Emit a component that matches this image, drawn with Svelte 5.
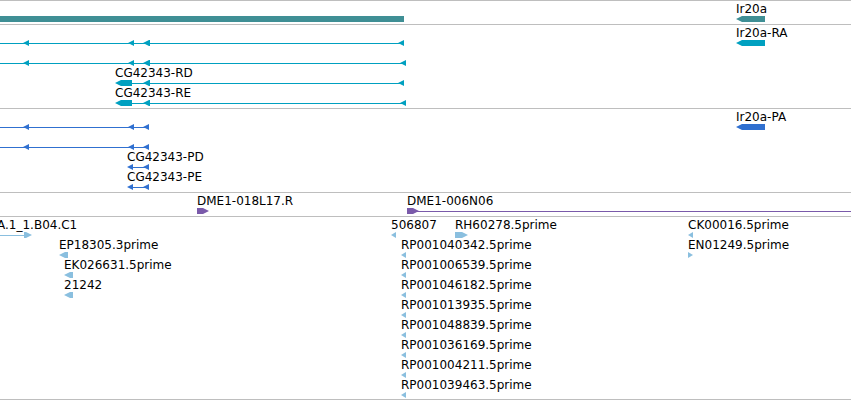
<script>

const teal = "#3f8f95"
const cyan = "#00a0c0"
const blue = "#3070d0"
const purple = "#7a5aaa"
const sky = "#8abfdf"

// an arrow: x, width, dir ("left", "right" or "none")
const left = (x, w) => ({ x, w, dir: "left" })
const right = (x, w) => ({ x, w, dir: "right" })

// line: [start, end] of the thin connector, labels: [x, text]
const tracks = [
  {
    name: "Genes", color: teal,
    rows: [
      { labels: [[736, "Ir20a"]], arrows: [{ x: 0, w: 404, dir: "none" }, left(736, 29)] }
    ]
  },
  {
    name: "Transcripts", color: cyan,
    rows: [
      { line: [0, 400], labels: [[736, "Ir20a-RA"]], arrows: [left(23, 6), left(128, 6), left(143, 7), left(398, 6), left(736, 29)] },
      { line: [0, 402], arrows: [left(23, 6), left(128, 6), left(143, 7), left(400, 6)] },
      { line: [118, 400], labels: [[115, "CG42343-RD"]], arrows: [left(115, 17), left(143, 7), left(398, 6)] },
      { line: [118, 402], labels: [[115, "CG42343-RE"]], arrows: [left(115, 17), left(143, 7), left(400, 6)] }
    ]
  },
  {
    name: "Proteins", color: blue,
    rows: [
      { line: [0, 146], labels: [[736, "Ir20a-PA"]], arrows: [left(23, 6), left(128, 6), left(143, 6), left(736, 29)] },
      { line: [0, 146], arrows: [left(23, 6), left(128, 6), left(143, 6)] },
      { line: [129, 146], labels: [[127, "CG42343-PD"]], arrows: [left(127, 6), left(143, 6)] },
      { line: [129, 146], labels: [[127, "CG42343-PE"]], arrows: [left(127, 6), left(143, 6)] }
    ]
  },
  {
    name: "Clones", color: purple,
    rows: [
      { line: [412, 4000], labels: [[197, "DME1-018L17.R"], [407, "DME1-006N06"]], arrows: [right(197, 12), right(407, 12)] }
    ]
  },
  {
    name: "ESTs", color: sky,
    rows: [
      {
        line: [0, 28],
        labels: [[-3, "A.1_1.B04.C1"], [391, "506807"], [455, "RH60278.5prime"], [688, "CK00016.5prime"]],
        arrows: [right(24, 8), left(391, 5), right(455, 13), left(688, 5)]
      },
      { labels: [[59, "EP18305.3prime"], [401, "RP001040342.5prime"], [688, "EN01249.5prime"]], arrows: [left(59, 9), left(401, 5), right(688, 5)] },
      { labels: [[64, "EK026631.5prime"], [401, "RP001006539.5prime"]], arrows: [left(64, 9), left(401, 5)] },
      { labels: [[64, "21242"], [401, "RP001046182.5prime"]], arrows: [left(64, 9), left(401, 5)] },
      { labels: [[401, "RP001013935.5prime"]], arrows: [left(401, 5)] },
      { labels: [[401, "RP001048839.5prime"]], arrows: [left(401, 5)] },
      { labels: [[401, "RP001036169.5prime"]], arrows: [left(401, 5)] },
      { labels: [[401, "RP001004211.5prime"]], arrows: [left(401, 5)] },
      { labels: [[401, "RP001039463.5prime"]], arrows: [left(401, 5)] }
    ]
  }
]

function shape({ x, w, dir }) {
  const head = Math.min(6, w)
  const end = x + w
  if ( dir === "none" ) return `M${x} 0H${end}V6H${x}Z`
  if ( dir === "left" ) return `M${end} 0V6H${x + head}L${x} 3L${x + head} 0Z`
  return `M${x} 0V6H${end - head}L${end} 3L${end - head} 0Z`
}

</script>

<main class="browser">
  {#each tracks as track}
    <section class="track" aria-label={track.name}>
      {#each track.rows as row}
        <div class="row">
          {#each row.labels ?? [] as [x, text]}
            <span class="label" style="left: {x}px">{text}</span>
          {/each}
          <svg class="features" fill={track.color} aria-hidden="true">
            {#if row.line}
              <rect x={row.line[0]} y="3" width={row.line[1] - row.line[0]} height="1" />
            {/if}
            {#each row.arrows as arrow}
              <path d={shape(arrow)} />
            {/each}
          </svg>
        </div>
      {/each}
    </section>
  {/each}
</main>

<style>
  :global(body) {
    margin: 0;
    background: white;
  }

  .browser {
    overflow: hidden;
    border-bottom: 1px solid #bebebe;
    font-family: "DejaVu Sans", sans-serif;
    font-size: 12px;
    line-height: 14px;
    color: black;
  }

  .track {
    padding: 2px 0 1px;
    border-top: 1px solid #bebebe;
  }

  .track:last-child {
    padding-bottom: 0;
  }

  .row {
    position: relative;
    display: flex;
    align-items: flex-end;
    height: 20px;
  }

  .label {
    position: absolute;
    top: -1px;
    white-space: nowrap;
  }

  .features {
    display: block;
    width: 100%;
    height: 6px;
    margin-bottom: 1px;
  }
</style>
